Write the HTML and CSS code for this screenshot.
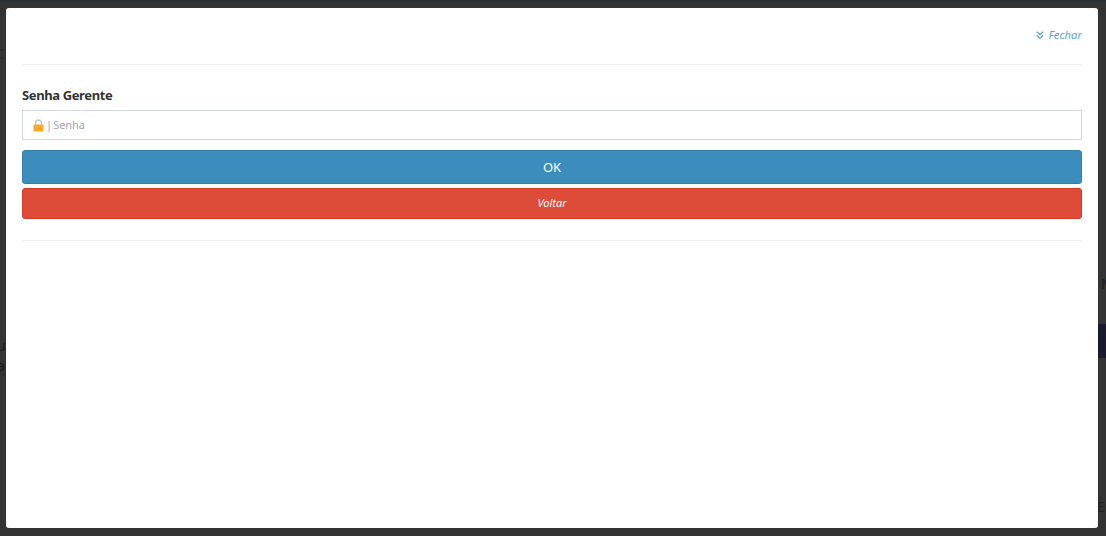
FILE: index.html
```html
<!DOCTYPE html>
<html>
<head>
    <meta charset="UTF-8">
    <title>Senha Gerente</title>
    <link rel="stylesheet" href="styles.css">
</head>
<body>
    <!-- restos da pagina atras do backdrop -->
    <div class="behind-top"></div>
    <div class="behind-band"></div>
    <span class="behind-text t1">C</span>
    <span class="behind-text t2">u</span>
    <span class="behind-text t3">a</span>
    <span class="behind-text t4">M</span>
    <span class="behind-text t5">Er</span>

    <div class="modal">
        <div class="modal-header">
            <a class="close-link" href="#">
                <svg class="close-icon" width="8" height="9" viewBox="0 0 8 9" fill="none" stroke="currentColor" stroke-width="1.3">
                    <path d="M0.8 0.8 L4 3.6 L7.2 0.8"/>
                    <path d="M0.8 4.6 L4 7.4 L7.2 4.6"/>
                </svg>
                <span>Fechar</span>
            </a>
        </div>
        <div class="modal-body">
            <label class="field-label" for="senha">Senha Gerente</label>
            <div class="input-box">
                <svg class="lock-icon" width="11" height="13" viewBox="0 0 11 13">
                    <path d="M2.6 6 V3.8 a2.9 2.9 0 0 1 5.8 0 V6" fill="none" stroke="#c9c9c9" stroke-width="1.5"/>
                    <rect x="0.5" y="5.5" width="10" height="7" rx="1" fill="#fba92c"/>
                </svg>
                <span class="input-text">| Senha</span>
            </div>
            <button class="btn btn-ok">OK</button>
            <button class="btn btn-back">Voltar</button>
        </div>
    </div>
</body>
</html>
```

FILE: styles.css
```css
html, body {
    height: 100%;
}
body {
    margin: 0;
    padding: 8px 8px 8px 6px;
    box-sizing: border-box;
    background-color: #333333;
    font-family: "Noto Sans", sans-serif;
    overflow: hidden;
}
.behind-top {
    position: absolute;
    top: 0;
    left: 0;
    right: 0;
    height: 2px;
    background-color: #2a3038;
}
.behind-band {
    position: absolute;
    top: 324px;
    right: 0;
    width: 8px;
    height: 34px;
    background-color: #1a1a2e;
}
.behind-text {
    position: absolute;
    font-size: 14px;
    line-height: 16px;
    color: #1a1a1a;
}
.t1 { left: -5px; top: 46px; color: #272727; }
.t2 { left: -3px; top: 338px; }
.t3 { left: -3px; top: 358px; }
.t4 { left: 1101px; top: 276px; }
.t5 { left: 1097px; top: 499px; color: #222222; }

.modal {
    position: relative;
    height: 520px;
    background-color: #fff;
    border-radius: 3px;
    padding: 0 16px;
    box-sizing: border-box;
}
.modal-header {
    height: 57px;
    padding-top: 19px;
    box-sizing: border-box;
    border-bottom: 1px solid #eeeeee;
    display: flex;
    justify-content: flex-end;
    align-items: flex-start;
}
.close-link {
    display: flex;
    align-items: center;
    gap: 4px;
    color: #5ba4d1;
    font-size: 11.3px;
    line-height: 16px;
    font-style: italic;
    text-decoration: none;
}
.modal-body {
    padding-top: 21px;
    padding-bottom: 21px;
    border-bottom: 1px solid #eeeeee;
}
.field-label {
    display: block;
    font-size: 13px;
    line-height: 18px;
    font-weight: 700;
    letter-spacing: -0.38px;
    color: #333;
    margin-bottom: 6px;
}
.input-box {
    height: 30px;
    box-sizing: border-box;
    border: 1px solid #d2d6de;
    display: flex;
    align-items: center;
    padding-left: 10px;
    gap: 2px;
    margin-bottom: 10px;
}
.input-text {
    font-size: 11px;
    letter-spacing: -0.1px;
    word-spacing: -1.5px;
    color: #a5a6b3;
    padding-bottom: 1px;
}
.btn {
    display: block;
    width: 100%;
    color: #fff;
    border-radius: 3px;
    font-family: inherit;
    padding: 0;
    cursor: pointer;
}
.btn-ok {
    height: 34px;
    font-size: 13px;
    background-color: #3c8dbc;
    border: 1px solid #367fa9;
    margin-bottom: 4px;
}
.btn-back {
    height: 31px;
    font-size: 11px;
    font-style: italic;
    padding-bottom: 2px;
    background-color: #dd4b39;
    border: 1px solid #d73925;
}
```
